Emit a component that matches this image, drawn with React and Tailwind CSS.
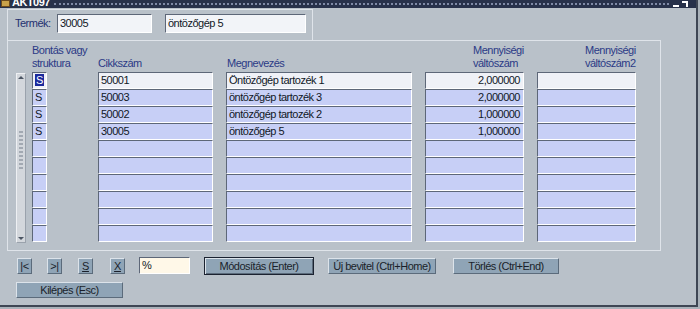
const rows = [
  { s: 'S', c: '50001', m: 'Öntözőgép tartozék 1', q: '2,000000' },
  { s: 'S', c: '50003', m: 'öntözőgép tartozék 3', q: '2,000000' },
  { s: 'S', c: '50002', m: 'öntözőgép tartozék 2', q: '1,000000' },
  { s: 'S', c: '30005', m: 'öntözőgép 5', q: '1,000000' },
  {}, {}, {}, {}, {}, {},
];

const sunken = 'border border-t-[#5d6778] border-l-[#5d6778] border-b-white border-r-white';

function Cell({ w, first, right, children }) {
  return (
    <div
      className={`h-[17px] ${w} ${sunken} ${first ? 'bg-[#eff1f7]' : 'bg-[#c7cff6]'} ${right ? 'text-right pr-[3px]' : 'pl-[2px]'} leading-[14px] whitespace-nowrap overflow-hidden text-[#111827]`}
    >
      {children}
    </div>
  );
}

function SmallBtn({ children, w = 'w-[15px]', className = '' }) {
  return (
    <div
      className={`${w} h-[16px] bg-[#8fa4b6] border border-t-[#dce3ea] border-l-[#dce3ea] border-b-[#5b6b7b] border-r-[#5b6b7b] flex items-center justify-center leading-none text-[#1a1f2a] ${className}`}
    >
      {children}
    </div>
  );
}

export default function App() {
  return (
    <div className="w-[700px] h-[309px] bg-[#aab2ba] overflow-hidden">
      <div
        className="w-[698px] h-[307px] bg-[#b9c1c9] border-r-2 border-b-2 border-r-[#3e4654] border-b-[#3e4654] flex flex-col text-[11px] tracking-[-0.5px]"
        style={{ fontFamily: '"Liberation Sans", Arial, sans-serif' }}
      >
        {/* Title bar */}
        <div className="h-[8px] bg-[#27314a] flex items-end overflow-hidden shrink-0">
          <div className="w-[9px] h-[7px] ml-[1px] mb-[1px] bg-[#c9a24a] border border-[#6b4a1c]" />
          <span className="ml-[2px] leading-[11px] text-white font-bold">AKT097</span>
          <div className="flex-1 self-center mx-[4px] border-t-2 border-dotted border-[#7f8aa6]" />
          <div className="flex items-end gap-[3px] mr-[8px] mb-[1px]">
            <div className="w-[6px] h-[2px] bg-white" />
            <div className="w-[6px] h-[6px] border-t-2 border-r-2 border-white" />
          </div>
        </div>

        {/* Header frame */}
        <div className="ml-[7px] mt-[1px] w-[306px] h-[31px] border-x border-t border-[#dfe4ea] flex items-start pt-[4px] pl-[7px]">
          <div className="w-[42px] h-[19px] leading-[19px] text-[#233070]">Termék:</div>
          <div className={`w-[95px] h-[19px] ${sunken} bg-[#f2f4f8] pl-[2px] leading-[17px] text-[#111827]`}>30005</div>
          <div className={`ml-[13px] w-[141px] h-[19px] ${sunken} bg-[#f2f4f8] pl-[2px] leading-[17px] text-[#111827]`}>öntözőgép 5</div>
        </div>

        {/* Grid frame */}
        <div className="ml-[7px] w-[654px] h-[211px] border border-[#dfe4ea] flex flex-col">
          <div className="h-[31px] flex items-end pb-[2px] pl-[24px] leading-[13px] text-[#2b3a86]">
            <div className="w-[15px] whitespace-nowrap">
              Bontás vagy
              <br />
              struktura
            </div>
            <div className="ml-[51px] w-[115px]">Cikkszám</div>
            <div className="ml-[13px] w-[186px] pl-[1px]">Megnevezés</div>
            <div className="ml-[13px] w-[99px] pl-[48px] whitespace-nowrap">
              Mennyiségi
              <br />
              váltószám
            </div>
            <div className="ml-[13px] w-[99px] pl-[48px] whitespace-nowrap">
              Mennyiségi
              <br />
              váltószám2
            </div>
          </div>

          <div className="flex">
            {/* Scrollbar */}
            <div className="ml-[8px] mt-[1px] w-[10px] h-[170px] bg-[#d3d7dc] border border-t-[#eef0f3] border-l-[#eef0f3] border-b-[#9aa2ac] border-r-[#9aa2ac] flex flex-col items-center justify-between py-[2px]">
              <div className="w-0 h-0 border-x-[3px] border-x-transparent border-b-[3px] border-b-[#4b5563]" />
              <div className="w-[4px] h-[38px] mt-[52px] border-x-2 border-dotted border-[#a2a9b2]" />
              <div className="flex-1" />
              <div className="w-0 h-0 border-x-[3px] border-x-transparent border-t-[3px] border-t-[#4b5563]" />
            </div>

            <div className="ml-[6px] flex flex-col">
              {rows.map((r, i) => (
                <div key={i} className="flex">
                  <Cell w="w-[15px]" first={i === 0}>
                    {r.s && i === 0 ? (
                      <span className="bg-[#1c2a9c] text-white px-[1px]">{r.s}</span>
                    ) : (
                      r.s
                    )}
                  </Cell>
                  <div className="ml-[51px]">
                    <Cell w="w-[115px]" first={i === 0}>{r.c}</Cell>
                  </div>
                  <div className="ml-[13px]">
                    <Cell w="w-[186px]" first={i === 0}>{r.m}</Cell>
                  </div>
                  <div className="ml-[13px]">
                    <Cell w="w-[99px]" first={i === 0} right>{r.q}</Cell>
                  </div>
                  <div className="ml-[13px]">
                    <Cell w="w-[99px]" first={i === 0} />
                  </div>
                </div>
              ))}
            </div>
          </div>
        </div>

        {/* Buttons */}
        <div className="pl-[17px] mt-[6px] flex items-start">
          <SmallBtn className="mt-[1px]">|&lt;</SmallBtn>
          <SmallBtn className="ml-[15px] mt-[1px]">&gt;|</SmallBtn>
          <SmallBtn className="ml-[16px] mt-[1px]"><span className="underline">S</span></SmallBtn>
          <SmallBtn className="ml-[17px] mt-[1px]"><span className="underline">X</span></SmallBtn>
          <div className={`ml-[14px] w-[51px] h-[17px] ${sunken} bg-[#fff8e8] pl-[2px] leading-[15px] text-[#111827]`}>%</div>
          <div className="ml-[14px] w-[110px] h-[18px] bg-[#8fa4b6] border border-[#1b2230] shadow-[inset_1px_1px_0_#dce3ea,inset_-1px_-1px_0_#5b6b7b] flex items-center justify-center text-[#1a1f2a]">
            Módosítás (Enter)
          </div>
          <SmallBtn w="w-[108px]" className="ml-[14px] mt-[1px]">Új bevitel (Ctrl+Home)</SmallBtn>
          <SmallBtn w="w-[106px]" className="ml-[17px] mt-[1px]">Törlés (Ctrl+End)</SmallBtn>
        </div>
        <div className="pl-[16px] mt-[7px]">
          <SmallBtn w="w-[107px]">Kilépés (Esc)</SmallBtn>
        </div>
      </div>
    </div>
  );
}
